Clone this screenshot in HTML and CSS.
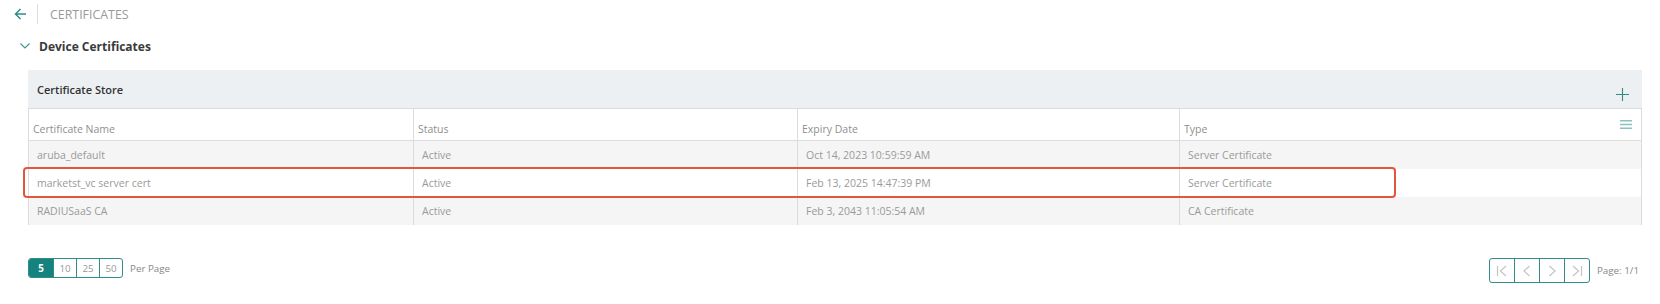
FILE: index.html
```html
<!DOCTYPE html>
<html lang="en">
<head>
  <meta charset="UTF-8">
  <title>Certificates</title>
  <link rel="stylesheet" href="styles.css">
</head>
<body>
  <div class="topbar">
    <svg class="back" width="13" height="12" viewBox="0 0 13 12">
      <path d="M12 6H1.5M6.5 1L1.5 6l5 5" fill="none" stroke="#2f8c88" stroke-width="1.5"/>
    </svg>
    <span class="divider"></span>
    <span class="crumb">CERTIFICATES</span>
  </div>

  <div class="section-title">
    <svg class="chevron" width="10" height="6" viewBox="0 0 10 6">
      <path d="M0.5 0.5L5 5l4.5-4.5" fill="none" stroke="#3f9591" stroke-width="1.1"/>
    </svg>
    Device Certificates
  </div>

  <div class="panel">
    <div class="panel-head">
      <span class="panel-title">Certificate Store</span>
      <svg class="plus" width="13" height="13" viewBox="0 0 13 13">
        <path d="M6.5 0v13M0 6.5h13" stroke="#2f8c88" stroke-width="1.1"/>
      </svg>
    </div>
    <table class="cert-table">
      <colgroup>
        <col style="width: 385px">
        <col style="width: 384px">
        <col style="width: 382px">
        <col>
      </colgroup>
      <thead>
        <tr>
          <th><span class="th-label">Certificate Name</span></th>
          <th><span class="th-label">Status</span></th>
          <th><span class="th-label">Expiry Date</span></th>
          <th>
            <div class="th-last">
              <span class="th-label">Type</span>
              <svg class="menu" width="12" height="9" viewBox="0 0 12 9">
                <path d="M0 0.75h12M0 4.5h12M0 8.25h12" stroke="#8cc3c0" stroke-width="1.5"/>
              </svg>
            </div>
          </th>
        </tr>
      </thead>
      <tbody>
        <tr>
          <td>aruba_default</td>
          <td>Active</td>
          <td>Oct 14, 2023 10:59:59 AM</td>
          <td>Server Certificate</td>
        </tr>
        <tr>
          <td>marketst_vc server cert</td>
          <td>Active</td>
          <td>Feb 13, 2025 14:47:39 PM</td>
          <td>Server Certificate</td>
        </tr>
        <tr>
          <td>RADIUSaaS CA</td>
          <td>Active</td>
          <td>Feb 3, 2043 11:05:54 AM</td>
          <td>CA Certificate</td>
        </tr>
      </tbody>
    </table>
    <div class="highlight"></div>
  </div>

  <div class="pager">
    <div class="per-page">
      <div class="btn-group">
        <span class="pp-btn active">5</span>
        <span class="pp-btn">10</span>
        <span class="pp-btn">25</span>
        <span class="pp-btn">50</span>
      </div>
      <span class="pager-label">Per Page</span>
    </div>
    <div class="page-nav">
      <div class="btn-group">
        <span class="nav-btn">
          <svg width="12" height="12" viewBox="0 0 12 12"><path d="M1.5 1v10M10 1L4.5 6l5.5 5" fill="none" stroke="#c4c4c4" stroke-width="1.2"/></svg>
        </span>
        <span class="nav-btn">
          <svg width="12" height="12" viewBox="0 0 12 12"><path d="M8.5 1L3 6l5.5 5" fill="none" stroke="#c4c4c4" stroke-width="1.2"/></svg>
        </span>
        <span class="nav-btn">
          <svg width="12" height="12" viewBox="0 0 12 12"><path d="M3.5 1L9 6l-5.5 5" fill="none" stroke="#c4c4c4" stroke-width="1.2"/></svg>
        </span>
        <span class="nav-btn">
          <svg width="12" height="12" viewBox="0 0 12 12"><path d="M2 1l5.5 5L2 11M10.5 1v10" fill="none" stroke="#c4c4c4" stroke-width="1.2"/></svg>
        </span>
      </div>
      <span class="pager-label">Page: 1/1</span>
    </div>
  </div>
</body>
</html>
```

FILE: styles.css
```css
body {
  margin: 0;
  font-family: "Open Sans", "Noto Sans", sans-serif;
  color: #333;
  background: #fff;
}

.topbar {
  display: flex;
  align-items: center;
  height: 28px;
  padding-left: 14px;
}
.back { display: block; }
.divider {
  width: 1px;
  height: 20px;
  margin-left: 10px;
  background: #ddd;
}
.crumb {
  margin-left: 12px;
  font-size: 12.4px;
  color: #9a9a9a;
}

.section-title {
  display: flex;
  align-items: center;
  height: 28px;
  margin-top: 4px;
  padding-left: 20px;
  font-size: 12px;
  font-weight: 700;
  color: #3a3a3a;
}
.chevron {
  margin-right: 9px;
}

.panel {
  position: relative;
  margin: 10px 18px 0 28px;
}
.panel-head {
  display: flex;
  justify-content: space-between;
  align-items: center;
  height: 38px;
  padding: 0 13px 0 9px;
  background: #edf0f3;
}
.panel-title {
  font-size: 11px;
  font-weight: 600;
  color: #333;
}
.plus {
  margin-top: 10px;
}

.cert-table {
  width: 100%;
  border-collapse: collapse;
  table-layout: fixed;
  font-size: 10.5px;
  border-left: 1px solid #dcdcdc;
  border-right: 1px solid #dcdcdc;
}
.cert-table th {
  height: 31px;
  padding: 0 4px;
  text-align: left;
  font-weight: 400;
  color: #8f8f8f;
  border-top: 1px solid #dcdcdc;
  border-bottom: 1px solid #dcdcdc;
  border-left: 1px solid #dcdcdc;
  vertical-align: middle;
}
.th-label {
  display: inline-block;
  padding-top: 8px;
}
.th-last {
  display: flex;
  justify-content: space-between;
  align-items: center;
  padding-right: 5px;
}
.menu { display: block; }

.cert-table td {
  height: 28px;
  padding: 0 8px;
  color: #9a9a9a;
  border-left: 1px solid #dcdcdc;
  white-space: nowrap;
}
.cert-table tbody tr:nth-child(odd) td {
  background: #f5f5f5;
}

.highlight {
  position: absolute;
  left: -5px;
  top: 97px;
  width: 1373px;
  height: 31px;
  box-sizing: border-box;
  border: 2px solid #e4553e;
  border-radius: 4px;
}

.pager {
  display: flex;
  justify-content: space-between;
  align-items: flex-start;
  margin: 33px 21px 0 28px;
  font-size: 9.8px;
}
.per-page, .page-nav {
  display: flex;
  align-items: center;
}
.btn-group {
  display: flex;
  border: 1px solid #2f8c88;
  border-radius: 3px;
  overflow: hidden;
}
.pp-btn {
  display: flex;
  align-items: center;
  justify-content: center;
  width: 22px;
  height: 18px;
  color: #999;
  border-left: 1px solid #2f8c88;
}
.pp-btn:first-child {
  border-left: none;
  width: 24px;
}
.pp-btn.active {
  background: #14837d;
  color: #fff;
  font-weight: 700;
}
.nav-btn {
  display: flex;
  align-items: center;
  justify-content: center;
  width: 24px;
  height: 23px;
  border-left: 1px solid #2f8c88;
}
.nav-btn:first-child { border-left: none; }
.pager-label {
  margin-left: 7px;
  color: #888;
}
.page-nav .pager-label {
  margin-left: 7px;
}
```
